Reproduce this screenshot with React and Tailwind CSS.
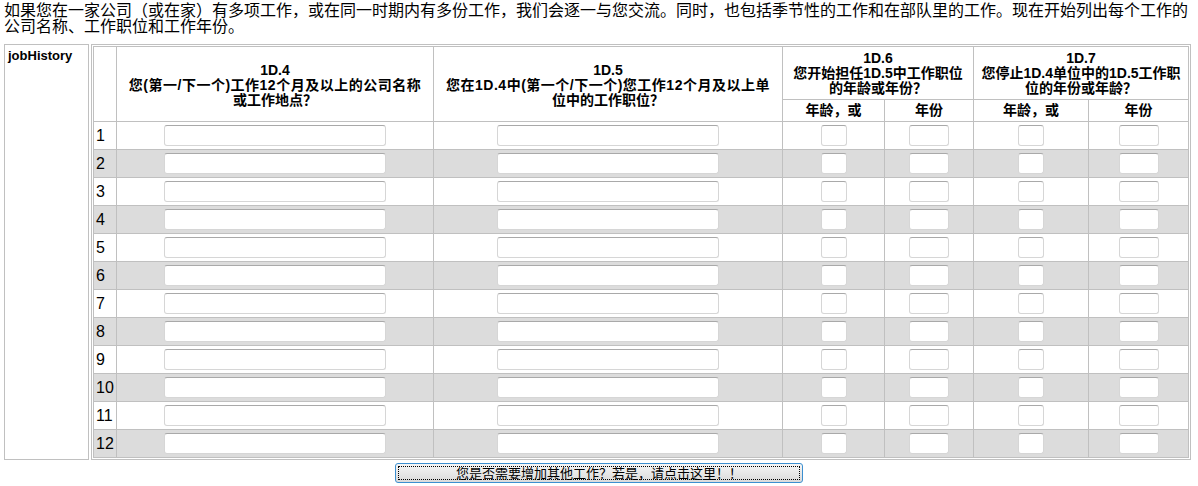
import React from 'react';

const rows = Array.from({ length: 12 }, (_, i) => i + 1);

function Field({ w }) {
  return (
    <input
      type="text"
      className={`${w} h-[21px] bg-white border border-[#d6d6d6] border-t-[#a9a9a9] rounded-[3px] outline-none`}
    />
  );
}

export default function App() {
  const cell = 'border-r border-b border-[#c0c0c0]';
  const head = `${cell} flex flex-col items-center justify-center text-center font-bold text-[14px] leading-[15px] text-black`;

  return (
    <div
      className="w-[1198px] h-[486px] bg-white overflow-hidden text-black"
      style={{ fontFamily: '"Liberation Sans", "Noto Sans CJK SC", sans-serif' }}
    >
      <p className="pl-1 pt-[3px] text-[16px] leading-4">
        如果您在一家公司（或在家）有多项工作，或在同一时期内有多份工作，我们会逐一与您交流。同时，也包括季节性的工作和在部队里的工作。现在开始列出每个工作的
        <br />
        公司名称、工作职位和工作年份。
      </p>

      <div className="flex mt-[9px] ml-1">
        <div className="w-[85px] h-[416px] border border-[#c0c0c0] pl-[3px] pt-[3px] text-[13px] font-bold leading-4">
          jobHistory
        </div>

        <div className="ml-[2px] w-[1100px] border border-[#c0c0c0] p-[1px]">
          <div className="grid grid-cols-[23px_317px_349px_102px_89px_115px_100px] grid-rows-[53px_22px_repeat(12,28px)] border-l border-t border-[#c0c0c0]">
            <div className={`${cell} row-span-2`} />
            <div className={`${head} row-span-2 pt-[3px]`}>
              <span>1D.4</span>
              <span className="tracking-[0.5px]">您(第一/下一个)工作12个月及以上的公司名称</span>
              <span>或工作地点？</span>
            </div>
            <div className={`${head} row-span-2 pt-[3px]`}>
              <span>1D.5</span>
              <span className="tracking-[0.5px]">您在1D.4中(第一个/下一个)您工作12个月及以上单</span>
              <span>位中的工作职位？</span>
            </div>
            <div className={`${head} col-span-2`}>
              <span>1D.6</span>
              <span>您开始担任1D.5中工作职位</span>
              <span>的年龄或年份？</span>
            </div>
            <div className={`${head} col-span-2`}>
              <span>1D.7</span>
              <span>您停止1D.4单位中的1D.5工作职</span>
              <span>位的年份或年龄？</span>
            </div>
            <div className={head}>年龄，或</div>
            <div className={head}>年份</div>
            <div className={head}>年龄，或</div>
            <div className={head}>年份</div>

            {rows.map((n) => {
              const bg = n % 2 === 0 ? 'bg-[#dcdcdc]' : 'bg-white';
              const c = `${cell} ${bg} flex items-center justify-center`;
              return (
                <React.Fragment key={n}>
                  <div className={`${cell} ${bg} flex items-center pl-[2px] text-[16px]`}>{n}</div>
                  <div className={c}><Field w="w-[222px]" /></div>
                  <div className={c}><Field w="w-[222px]" /></div>
                  <div className={c}><Field w="w-[26px]" /></div>
                  <div className={c}><Field w="w-[40px]" /></div>
                  <div className={c}><Field w="w-[26px]" /></div>
                  <div className={c}><Field w="w-[40px]" /></div>
                </React.Fragment>
              );
            })}
          </div>
        </div>
      </div>

      <div className="flex justify-center mt-[3px]">
        <button
          type="button"
          className="w-[408px] h-[20px] p-[2px] rounded-[3px] border border-[#3c8fd0] bg-gradient-to-b from-[#f6f6f6] to-[#dadada]"
        >
          <span className="flex items-center justify-center h-full border border-dotted border-black text-[13px] leading-none text-black">
            您是否需要增加其他工作？若是，请点击这里！！
          </span>
        </button>
      </div>
    </div>
  );
}
